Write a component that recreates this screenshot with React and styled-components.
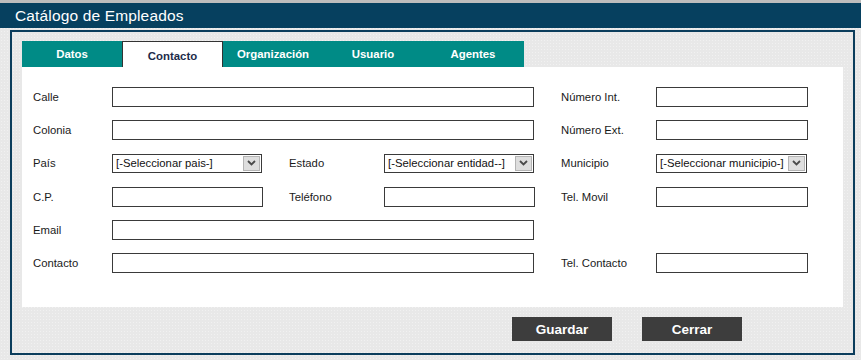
import React from "react"
import styled, {createGlobalStyle} from "styled-components"

const GlobalStyle = createGlobalStyle`
	html, body {
		margin: 0;
		padding: 0;
		background: #e8e8e8;
	}
	body {
		font-family: "Liberation Sans", Arial, sans-serif;
	}
`

const tabs = ["Datos", "Contacto", "Organización", "Usuario", "Agentes"]

export default function App() {
	return (
		<>
			<GlobalStyle />
			<Page>
				<TopStrip />
				<Header>Catálogo de Empleados</Header>
				<Body>
					<Panel>
						<Tabs>
							{tabs.map((title) => (
								<Tab key={title} active={title === "Contacto"}>{title}</Tab>
							))}
						</Tabs>

						<Content>
							<Form>
								<Label>Calle</Label>
								<Input wide />
								<Gap />
								<Label>Número Int.</Label>
								<Input />

								<Label>Colonia</Label>
								<Input wide />
								<Gap />
								<Label>Número Ext.</Label>
								<Input />

								<Label>País</Label>
								<Select text="[-Seleccionar pais-]" />
								<Gap />
								<Label>Estado</Label>
								<Select text="[-Seleccionar entidad--]" />
								<Gap />
								<Label>Municipio</Label>
								<Select text="[-Seleccionar municipio-]" />

								<Label>C.P.</Label>
								<Input />
								<Gap />
								<Label>Teléfono</Label>
								<Input />
								<Gap />
								<Label>Tel. Movil</Label>
								<Input />

								<Label>Email</Label>
								<Input wide />
								<Gap />
								<Label />
								<span />

								<Label>Contacto</Label>
								<Input wide />
								<Gap />
								<Label>Tel. Contacto</Label>
								<Input />
							</Form>
						</Content>

						<Actions>
							<Button>Guardar</Button>
							<Button>Cerrar</Button>
						</Actions>
					</Panel>
				</Body>
			</Page>
		</>
	)
}

const Select = ({text}) => (
	<SelectBox>
		<SelectText>{text}</SelectText>
		<SelectArrow>
			<svg width="9" height="6" viewBox="0 0 9 6">
				<path d="M1 1 L4.5 4.5 L8 1" fill="none" stroke="#4a4a4a" strokeWidth="1.8" />
			</svg>
		</SelectArrow>
	</SelectBox>
)

const Page = styled.div`
	width: 861px;
	height: 360px;
	background: #e8e8e8;
	background-image: radial-gradient(#f1f1f1 0.6px, transparent 0.7px);
	background-size: 3px 3px;
	display: flex;
	flex-direction: column;
`

const TopStrip = styled.div`
	height: 3px;
	background: #bdbdbd;
`

const Header = styled.div`
	height: 25px;
	line-height: 26px;
	background: #06405f;
	color: #ffffff;
	font-size: 15.5px;
	letter-spacing: 0.15px;
	padding-left: 15px;
`

const Body = styled.div`
	padding: 2px 6px 5px 10px;
`

const Panel = styled.div`
	border: 2px solid #0b3d5c;
	padding: 9px 10px 12px 10px;
`

const Tabs = styled.div`
	display: flex;
	height: 26px;
	width: 502px;
	background: #008b86;
`

const Tab = styled.div`
	box-sizing: border-box;
	flex: 0 0 ${props => props.active ? "101px" : "100px"};
	display: flex;
	align-items: center;
	justify-content: center;
	font-size: 11.4px;
	font-weight: bold;
	color: ${props => props.active ? "#1d2b4a" : "#ffffff"};
	background: ${props => props.active ? "#ffffff" : "#008b86"};
	border: ${props => props.active ? "1px solid #333333" : "none"};
	border-bottom: none;
	padding-top: ${props => props.active ? "2px" : "0"};
`

const Content = styled.div`
	background: #ffffff;
	height: 240px;
	box-sizing: border-box;
	padding: 20px 0 0 11px;
`

const Form = styled.div`
	display: grid;
	grid-template-columns: 79px 151px 26px 95px 151px 26px 95px 152px;
	grid-auto-rows: 20px;
	row-gap: 13.2px;
	align-items: center;
`

const Label = styled.div`
	font-size: 11.3px;
	color: #1a1a1a;
	white-space: nowrap;
`

const Gap = styled.span``

const Input = styled.div`
	box-sizing: border-box;
	height: 20px;
	border: 1px solid #3a3a3a;
	background: #ffffff;
	grid-column: ${props => props.wide ? "2 / 6" : "auto"};
	margin-right: ${props => props.wide ? "1px" : "0"};
`

const SelectBox = styled.div`
	box-sizing: border-box;
	height: 19px;
	border: 1px solid #3a3a3a;
	display: flex;
	align-items: stretch;
	background: #ffffff;
	margin-right: 1px;
`

const SelectText = styled.div`
	flex: 1;
	font-size: 11.3px;
	line-height: 17px;
	color: #111111;
	padding-left: 3px;
	white-space: nowrap;
	overflow: hidden;
`

const SelectArrow = styled.div`
	flex: 0 0 15px;
	margin: 1px;
	background: #dedede;
	border: 1px solid #b4b4b4;
	display: flex;
	align-items: center;
	justify-content: center;
`

const Actions = styled.div`
	display: flex;
	justify-content: flex-end;
	gap: 30px;
	margin-top: 10px;
	padding-right: 101px;
`

const Button = styled.div`
	width: 100px;
	height: 24px;
	background: #3d3d3d;
	color: #ffffff;
	font-size: 13.5px;
	font-weight: bold;
	display: flex;
	align-items: center;
	justify-content: center;
`
